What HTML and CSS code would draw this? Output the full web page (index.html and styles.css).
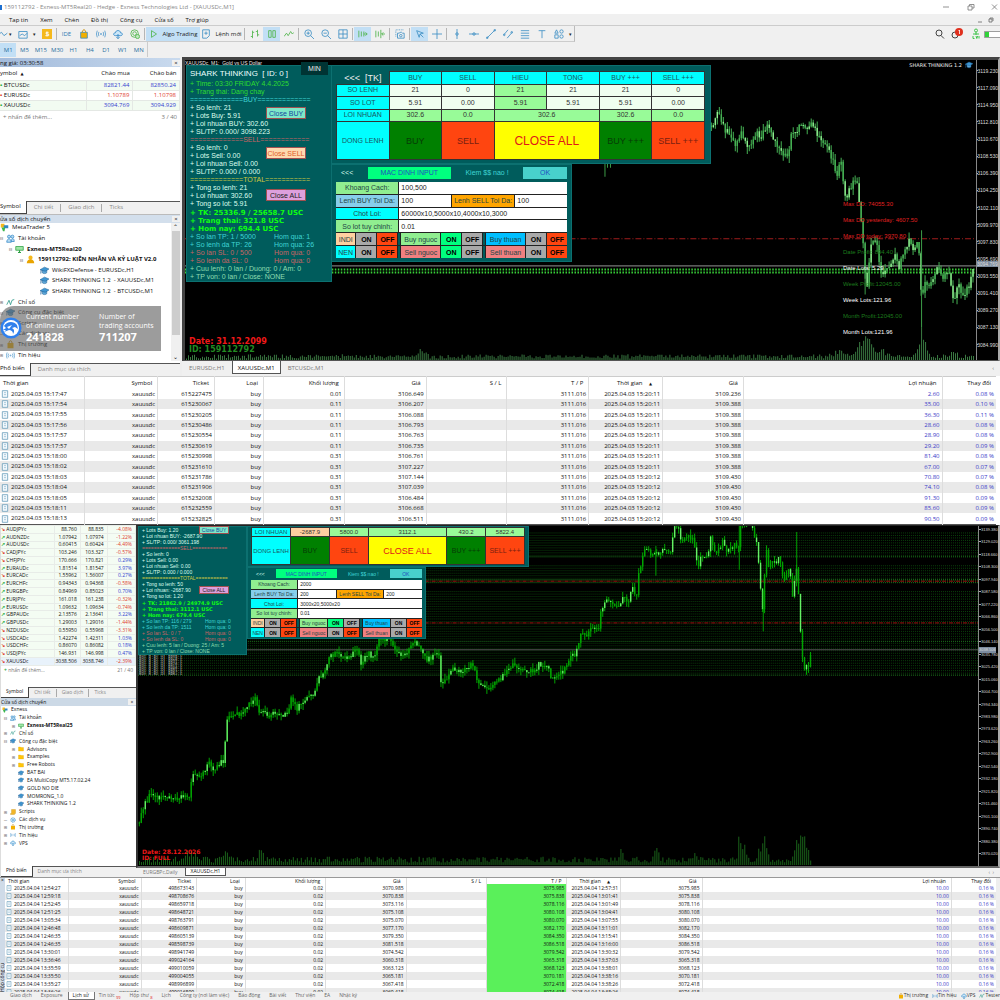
FILE: index.html
```html
<!DOCTYPE html>
<html lang="vi">
<head>
<meta charset="utf-8">
<meta name="viewport" content="width=device-width, initial-scale=1">
<title>Exness - MetaTrader 5</title>
<link rel="stylesheet" href="styles.css">
</head>
<body>
<svg width="0" height="0" class="defs" aria-hidden="true">
  <symbol id="i-cap" viewBox="0 0 12 12"><path d="M3 5v4c2 1.500 4 1.500 6 0V5z" fill="#5fa8d8" stroke="#1d5f96" stroke-width=".7"/><path d="M0 5l6-3.500L12 4 7 7z" fill="#3f97d3" stroke="#1d5f96" stroke-width=".7"/><path d="M1.500 5.500L1 10" stroke="#1d5f96"/></symbol>
  <symbol id="i-users" viewBox="0 0 12 12"><g fill="#b9dcf3" stroke="#2f86c5"><circle cx="4" cy="3.500" r="2"/><circle cx="8.500" cy="3.500" r="2"/><path d="M1 11c0-6 6-6 6 0zM7 10c0-5 4-5 4 0z"/></g></symbol>
  <symbol id="i-server" viewBox="0 0 12 12"><path d="M1 2h10v5H1z" fill="#9fe6a6" stroke="#2ca043"/><path d="M4 10h4M6 7v3" stroke="#2ca043" stroke-width="1.500"/></symbol>
  <symbol id="i-user" viewBox="0 0 12 12"><circle cx="6" cy="3.500" r="2.800" fill="#f5b81c"/><path d="M1 11c0-7 10-7 10 0z" fill="#e9a400"/></symbol>
  <symbol id="i-ind" viewBox="0 0 12 12"><path d="M1 9l3-6 2 6 2-6 3-1" fill="none" stroke="#2f9a8a" stroke-width="1.100"/></symbol>
  <symbol id="i-folder" viewBox="0 0 12 12"><path d="M1 2h4l1 1h5v7H1z" fill="#ffc50a" stroke="#dea200" stroke-width=".6"/></symbol>
  <symbol id="i-script" viewBox="0 0 12 12"><path d="M3 1h8v8H9v2H1V9h2z" fill="#f2b526" stroke="#b88100" stroke-width=".6"/></symbol>
  <symbol id="i-gear" viewBox="0 0 12 12"><circle cx="6" cy="6" r="4.500" fill="#cbe6f8" stroke="#2f86c5" stroke-dasharray="2 1" stroke-width="1.500"/><circle cx="6" cy="6" r="1.500" fill="#2f86c5"/></symbol>
  <symbol id="i-bag" viewBox="0 0 12 12"><path d="M2 4h8v7H2z" fill="#f2b000"/><path d="M4 4c0-4 4-4 4 0" fill="none" stroke="#c98c00" stroke-width="1.200"/></symbol>
  <symbol id="i-sig" viewBox="0 0 12 12"><g fill="none" stroke="#2f86c5" stroke-width=".8"><circle cx="6" cy="6" r=".7"/><path d="M3.500 3.500q-1.500 2.500 0 5M8.500 3.500q1.500 2.500 0 5M1.500 2q-2 4 0 8M10.500 2q2 4 0 8"/></g></symbol>
  <symbol id="i-cloud" viewBox="0 0 12 12"><path d="M3 8C0 8 0 4.500 3 4.500 3 1 9 1 9 4.500c3 0 3 3.500 0 3.500z" fill="#cbe6f8" stroke="#2f86c5"/><path d="M6 6v5M4 10l2 1.500L8 10" fill="none" stroke="#2f86c5"/></symbol>
  <symbol id="i-mt" viewBox="0 0 12 12"><path d="M1 1h5v5H1z" fill="#f5b81c"/><path d="M5 3h6v4H5z" fill="#2f86c5"/><path d="M2 6h5l-1 5H4z" fill="#3cb54a"/></symbol>
  <symbol id="i-doc" viewBox="0 0 12 12"><path d="M2 1h8v10H2z" fill="#f3f9fd" stroke="#4f8cad"/><path d="M5 4h2M5 7h2" stroke="#4f8cad"/></symbol>
</svg>

<section class="app app-a">
  <header class="titlebar">
    <span class="app-mark"></span>
    <span>159112792 - Exness-MT5Real20 - Hedge - Exness Technologies Ltd - [XAUUSDc,M1]</span>
    <span class="win-ctl">
      <svg viewBox="0 0 60 8"><path d="M3 4h6M28 3h4v4h-4zM29.500 3V1.500H34V5h-2M52 1.500l5 5M57 1.500l-5 5" fill="none" stroke="#777" stroke-width=".8"/></svg>
    </span>
  </header>
  <nav class="menubar">
    <a href="#">Tap tin</a><a href="#">Xem</a><a href="#">Chèn</a><a href="#">Đồ thị</a><a href="#">Công cụ</a><a href="#">Cửa sổ</a><a href="#">Trợ giúp</a>
    <svg class="mdi" viewBox="0 0 24 8"><path d="M2 6h4M13 3h3v3h-3zM14 3V2h3v3" fill="none" stroke="#666" stroke-width=".8"/></svg>
  </nav>
  <div class="toolbar">
    <div class="tools" id="tools"></div>
    <svg class="status" viewBox="0 0 66 14"><g fill="none" stroke="#444"><circle cx="5" cy="6" r="3"/><path d="M7 8.500l3 3"/><circle cx="21" cy="8" r="3"/></g><circle cx="25" cy="5" r="4" fill="#e0301e"/><path d="M24.500 4l1-1v4" fill="none" stroke="#fff" stroke-width=".8"/><g fill="none" stroke="#3fc44a"><circle cx="42" cy="3.500" r="1.500"/><path d="M39 7h6M42 5v3M39 9v2.500h1.500M42 9l.8 2.500.8-2.500M45 9v2.500"/></g><path d="M50.500 4.500h17v6h-17z" fill="#fff" stroke="#777" stroke-width=".7"/><path d="M51 5h4v5h-4z" fill="#31d23a"/></svg>
  </div>
  <div class="frames">
    <button class="on">M1</button><button>M5</button><button>M15</button><button>M30</button><button>H1</button><button>H4</button><button>D1</button><button>W1</button><button>MN</button>
  </div>

  <div class="work">
    <aside class="side">
      <h2 class="dock">ng giá: 03:30:58<button aria-label="Đóng">×</button></h2>
      <table class="watch">
        <thead><tr><th>ymbol &nbsp;<i>▲</i></th><th>Chào mua</th><th>Chào bán</th></tr></thead>
        <tbody>
          <tr><td><b class="up">•</b> BTCUSDc</td><td class="blue">82821.44</td><td class="blue">82850.24</td></tr>
          <tr><td><b class="down">•</b> EURUSDc</td><td class="red">1.10789</td><td class="red">1.10798</td></tr>
          <tr><td><b class="up">•</b> XAUUSDc</td><td class="blue">3094.769</td><td class="blue">3094.929</td></tr>
        </tbody>
      </table>
      <p class="add"><span>+ nhấn để thêm...</span><span>3 / 40</span></p>
      <nav class="tabs"><a href="#" class="on">Symbol</a><a href="#">Chi tiết</a><a href="#">Giao dịch</a><a href="#">Ticks</a></nav>
      <h2 class="dock dock-nav">ửa sổ dịch chuyển<button aria-label="Đóng">×</button></h2>
      <div class="nav-box">
        <ul class="tree" id="tree-a"></ul>
        <div class="scroll"><span>⌃</span><i></i><span>⌄</span></div>
        <div class="stats">
          <svg class="eagle" viewBox="0 0 22 22"><circle cx="11" cy="11" r="10.500" fill="#2f80ed"/><circle cx="11" cy="11" r="8" fill="#fff"/><path d="M4 9c3-5 10-5 13-1l1 4-3-2-3 1c2 1 3 3 1 6 0-3-2-4-4-4l-5 2 2-2-3 0 3-2z" fill="#2f80ed"/><path d="M7 10l5-2-3 4z" fill="#fff"/></svg>
          <dl><dt>Current number<br>of online users</dt><dd>241828</dd></dl>
          <dl><dt>Number of<br>trading accounts</dt><dd>711207</dd></dl>
        </div>
      </div>
      <nav class="tabs tabs-foot"><a href="#" class="on">Phổ biến</a><a href="#">Danh mục ưa thích</a></nav>
    </aside>

    <div class="main">
      <div class="chart">
        <div class="plot">
          <svg id="plot-a" viewBox="185 61 792 298" preserveAspectRatio="none"></svg>
          <p class="caption">XAUUSDc, M1: &nbsp;Gold vs US Dollar</p>
          <p class="expert">SHARK THINKING 1.2 <svg viewBox="0 0 12 12"><use href="#i-cap"/></svg></p>
          <div class="info">
            <button class="min">MIN</button>
            <h3>SHARK THINKING &nbsp;[ ID: 0 ]</h3>
            <ul class="lines head"><li class="lime">+ Time: 03:30 FRIDAY 4.4.2025</li><li class="lime">+ Trang thai: Dang chay</li></ul>
            <ul class="lines">
              <li class="aqua">=============BUY=============</li>
              <li>+ So lenh: 21</li><li>+ Lots Buy: 5.91</li><li>+ Loi nhuan BUY: 302.60</li><li>+ SL/TP: 0.000/ 3098.223</li>
              <li class="rose">=============SELL============</li>
              <li>+ So lenh: 0</li><li>+ Lots Sell: 0.00</li><li>+ Loi nhuan Sell: 0.00</li><li>+ SL/TP: 0.000 / 0.000</li>
              <li class="gold">=============TOTAL===========</li>
              <li>+ Tong so lenh: 21</li><li>+ Loi nhuan: 302.60</li><li>+ Tong so lot: 5.91</li>
            </ul>
            <ul class="lines big"><li>+ TK: 25336.9 / 25658.7 USC</li><li>+ Trang thai: 321.8 USC</li><li>+ Hom nay: 694.4 USC</li></ul>
            <ul class="lines">
              <li class="aqua">+ So lan TP: 1 / 5000<span>Hom qua: 1</span></li><li class="aqua">+ So lenh da TP: 26<span>Hom qua: 26</span></li>
              <li class="rose">+ So lan SL: 0 / 500<span>Hom qua: 0</span></li><li class="rose">+ So lenh da SL: 0<span>Hom qua: 0</span></li>
              <li class="mint">+ Cuu lenh: 0 lan / Duong: 0 / Am: 0</li><li class="mint">+ TP von: 0 lan / Close: NONE</li>
            </ul>
            <button class="close c-buy">Close BUY</button><button class="close c-sell">Close SELL</button><button class="close c-all">Close ALL</button>
          </div>
          <div class="dash">
            <table>
              <tr><td class="none">&lt;&lt;&lt; &nbsp;[TK]</td><th>BUY</th><th>SELL</th><th>HIEU</th><th>TONG</th><th>BUY +++</th><th>SELL +++</th></tr>
              <tr><th>SO LENH</th><td>21</td><td>0</td><td class="g">21</td><td>21</td><td>21</td><td>0</td></tr>
              <tr><th>SO LOT</th><td>5.91</td><td>0.00</td><td class="g">5.91</td><td>5.91</td><td>5.91</td><td>0.00</td></tr>
              <tr><th>LOI NHUAN</th><td class="g">302.6</td><td class="g">0.0</td><td class="g" colspan="2">302.6</td><td class="g">302.6</td><td class="g">0.0</td></tr>
              <tr class="act"><th>DONG LENH</th><td><button class="b-buy">BUY</button></td><td><button class="b-sell">SELL</button></td><td colspan="2"><button class="b-all">CLOSE ALL</button></td><td><button class="b-buy">BUY +++</button></td><td><button class="b-sell">SELL +++</button></td></tr>
            </table>
          </div>
          <form class="inputs" data-values="100,500|100|100|60000x10,5000x10,4000x10,3000|0.01" data-sell="ON"></form>
          <ul class="dd">
            <li class="r">Max DD: 74055.30</li><li class="r">Max DD yesterday: 4607.50</li><li class="r">Max DD today: 3970.80</li><li class="n">Date Profit: 894.40</li><li>Date Lots: 5.29</li><li class="n">Week Profit:12045.00</li><li>Week Lots:121.96</li><li class="n">Month Profit:12045.00</li><li>Month Lots:121.96</li>
          </ul>
          <p class="stamp"><b>Date: 31.12.2099</b><b class="id">ID: 159112792</b></p>
        </div>
        <ol class="axis" id="axis-a"></ol>
      </div>
      <nav class="chart-tabs"><a href="#">EURUSDc,H1</a><a href="#" class="on">XAUUSDc,M1</a><a href="#">BTCUSDc,M1</a><span>‹</span></nav>
    </div>
  </div>
  <table class="deals" id="deals-a"></table>
</section>

<section class="app app-b">
  <div class="work">
    <aside class="side">
      <table class="watch" id="watch-b"></table>
      <p class="add"><span><b class="up">+</b> nhấn để thêm...</span><span>21 / 40</span></p>
      <nav class="tabs"><a href="#" class="on">Symbol</a><a href="#">Chi tiết</a><a href="#">Giao dịch</a><a href="#">Ticks</a></nav>
      <h2 class="dock dock-nav">Cửa sổ dịch chuyển<button aria-label="Đóng">×</button></h2>
      <ul class="tree" id="tree-b"></ul>
      <nav class="tabs tabs-foot"><a href="#" class="on">Phổ biến</a><a href="#">Danh mục ưa thích</a></nav>
    </aside>
    <div class="main">
      <div class="chart">
        <div class="plot">
          <svg id="plot-b" viewBox="138 525 841 342" preserveAspectRatio="none"></svg>
          <div class="info">
            <ul class="lines">
              <li>+ Lots Buy: 1.20</li><li>+ Loi nhuan BUY: -2687.90</li><li>+ SL/TP: 0.000/ 3061.198</li>
              <li class="rose">=============SELL============</li>
              <li>+ So lenh: 0</li><li>+ Lots Sell: 0.00</li><li>+ Loi nhuan Sell: 0.00</li><li>+ SL/TP: 0.000 / 0.000</li>
              <li class="gold">=============TOTAL===========</li>
              <li>+ Tong so lenh: 50</li><li>+ Loi nhuan: -2687.90</li><li>+ Tong so lot: 1.20</li>
            </ul>
            <ul class="lines big"><li>+ TK: 21862.9 / 24974.9 USC</li><li>+ Trang thai: 3112.1 USC</li><li>+ Hom nay: 679.4 USC</li></ul>
            <ul class="lines">
              <li class="aqua">+ So lan TP: 116 / 279<span>Hom qua: 0</span></li><li class="aqua">+ So lenh da TP: 1511<span>Hom qua: 0</span></li>
              <li class="rose">+ So lan SL: 0 / 7<span>Hom qua: 0</span></li><li class="rose">+ So lenh da SL: 0<span>Hom qua: 0</span></li>
              <li class="mint">+ Cuu lenh: 5 lan / Duong: 25 / Am: 5</li><li class="mint">+ TP von: 0 lan / Close: NONE</li>
            </ul>
            <button class="close c-buy">Close BUY</button><button class="close c-all">Close ALL</button>
          </div>
          <div class="dash">
            <table>
              <tr><th>LOI NHUAN</th><td class="p">-2687.9</td><td class="g">5800.0</td><td class="g" colspan="2">3112.1</td><td class="g">430.2</td><td class="g">5822.4</td></tr>
              <tr class="act"><th>DONG LENH</th><td><button class="b-buy">BUY</button></td><td><button class="b-sell">SELL</button></td><td colspan="2"><button class="b-all">CLOSE ALL</button></td><td><button class="b-buy">BUY +++</button></td><td><button class="b-sell">SELL +++</button></td></tr>
            </table>
          </div>
          <form class="inputs" data-values="2000|200|200|3000x20,5000x20|0.01" data-sell="OFF"></form>
          <ul class="orders" id="orders"></ul>
          <p class="stamp"><b>Date: 28.12.2026</b><b>ID: FULL</b></p>
        </div>
        <ol class="axis" id="axis-b"></ol>
      </div>
      <nav class="chart-tabs"><a href="#">EURGBPc,Daily</a><a href="#" class="on">XAUUSDc,H1</a><span>‹ &nbsp;›</span></nav>
    </div>
  </div>
  <div class="toolbox">
    <div class="grip"><button aria-label="Đóng">×</button><span>Hộp công cụ</span></div>
    <table class="deals" id="deals-b"></table>
  </div>
  <footer class="foot">
    <a href="#">Giao dịch</a><a href="#">Exposure</a><a href="#" class="on">Lịch sử</a><a href="#">Tin tức <sub>99</sub></a><a href="#">Hộp thư <sub>8</sub></a><a href="#">Lịch</a><a href="#">Công ty (nơi làm việc)</a><a href="#">Báo động</a><a href="#">Bài viết</a><a href="#">Thư viện</a><a href="#">EA</a><a href="#">Nhật ký</a>
    <span class="foot-right"><span><svg viewBox="0 0 12 12"><use href="#i-bag"/></svg>Thị trường</span><span><svg viewBox="0 0 12 12"><use href="#i-sig"/></svg>Tín hiệu</span><span><svg viewBox="0 0 12 12"><use href="#i-cloud"/></svg>VPS</span><span><svg viewBox="0 0 12 12"><use href="#i-ind"/></svg>Tester</span></span>
  </footer>
</section>
<script src="app.js"></script>
</body>
</html>
```

FILE: styles.css
```css
* { box-sizing: border-box; }
:root {
  --ui: "Open Sans", "Noto Sans", sans-serif;
  --teal: #005c5c;
}
body { margin: 0; background: #f0f0f0; font-family: var(--ui); color: #111; }
ul, ol, p, h2, h3, dl, dd { margin: 0; padding: 0; list-style: none; font-weight: normal; }
button, input { font: inherit; color: inherit; border: 0; padding: 0; margin: 0; background: none; border-radius: 0; min-width: 0; white-space: nowrap; }
a { color: inherit; text-decoration: none; }
table { border-collapse: collapse; width: 100%; table-layout: fixed; }
td, th { padding: 0; font-weight: normal; white-space: nowrap; overflow: hidden; }
.defs { position: absolute; }
.app { overflow: hidden; }
.app-a { font-size: 6px; }
.app-b { font-size: 5px; }

/* Title, menu and tool bars */
.titlebar { display: flex; align-items: center; height: 14px; background: #fff; color: #888; gap: 2px; }
.app-mark { width: 2px; height: 5px; background: #1d6fd0; }
.win-ctl { margin-left: auto; width: 60px; }
.win-ctl svg, .mdi { display: block; height: 8px; }
.menubar { display: flex; align-items: center; height: 12px; padding-left: 9px; gap: 12px; border-bottom: 1px solid #ccc; color: #111; }
.menubar .mdi { margin-left: auto; width: 24px; }
.toolbar { display: flex; align-items: center; justify-content: space-between; height: 16px; }
.tools { display: flex; align-items: center; height: 16px; border-right: 1px solid #bbb; border-bottom: 1px solid #ccc; }
.tools button { display: flex; align-items: center; justify-content: center; gap: 4px; width: 17px; height: 14px; color: #2878b0; }
.tools button.wide { width: 54px; color: #222; }
.tools button.mid { width: 43px; color: #222; }
.tools button.tiny { width: 7px; color: #222; font-size: 5px; }
.tools svg { width: 10px; height: 10px; flex: none; fill: none; stroke: #3d8fc4; }
.tools .on, .frames .on { background: #c2dff5; }
.tools hr { width: 1px; height: 12px; margin: 0 1px; border: 0; background: #b5b5b5; }
.status { width: 66px; height: 14px; }
.frames { display: flex; align-items: center; width: 148px; height: 15px; border-right: 1px solid #ccc; color: #2a6f9e; }
.frames button { flex: 1; height: 14px; }

/* Side docks */
.work { display: flex; }
.side { flex: none; background: #fff; display: flex; flex-direction: column; }
.app-a .side { width: 182px; border-right: 2px solid #eee; margin-top: 1px; }
.app-b .side { width: 136px; border-left: 1px solid #ddd; }
.dock { display: flex; justify-content: space-between; align-items: center; background: linear-gradient(90deg, #a3bbdb, #c9daee); font-size: inherit; }
.app-a .dock { height: 9px; }
.app-a .dock-nav { background: #d3dfec; border-top: 1px solid #bbb; }
.app-b .dock { height: 8px; background: #ccd9e6; }
.dock button { width: 8px; background: #f0f0f0; line-height: 6px; }
.watch td + td, .watch th + th { text-align: right; padding-right: 3px; }
.watch th { text-align: left; }
.watch i { font: 4px "DejaVu Sans", sans-serif; vertical-align: middle; }
.app-a .watch th { height: 13px; }
.app-a .watch th:first-child { width: 48%; }
.app-a .watch td { height: 10px; border: 1px solid #e4e8e4; border-left: 0; background: #f2fbf1; }
.app-a .watch tr:nth-child(2) td { background: #fff; }
.app-b .watch { height: 141px; line-height: 5px; }
.app-b .watch td { border: 1px solid #e8ece8; border-left: 0; background: #f4fcf3; }
.app-b .watch tr:last-child td { background: #e8f2fb; }
.up { color: #2eab3c; }
.down, .red { color: #e0402e; }
.blue { color: #3340d0; }
.add { display: flex; justify-content: space-between; color: #777; padding: 0 3px; }
.app-a .add { height: 12px; align-items: center; margin-bottom: 78px; }
.app-b .add { height: 8px; align-items: center; margin-bottom: 13px; }
.tabs { display: flex; color: #888; border-top: 1px solid #555; background: #f0f0f0; }
.tabs a { padding: 0 7px; border-right: 1px solid #aaa; margin: 2px 0; line-height: 7px; }
.tabs a:last-child { border: 0; }
.tabs .on { background: #fff; color: #111; border-right: 1px solid #444; border-bottom: 1px solid #444; margin: -1px 0 0; line-height: 10px; padding: 0 5px 0 0; }
.app-a .tabs { height: 13px; }
.app-b .tabs { height: 11px; }
.app-b .tabs a { margin: 1px 0; padding: 0 5px; line-height: 6px; }
.app-b .tabs .on { line-height: 8px; margin: -1px 0 0; }
.nav-box { position: relative; display: flex; }
.nav-box .tree { flex: 1; }
.tree { display: grid; grid-auto-rows: 1fr; }
.app-a .tree { height: 138px; }
.app-b .tree { height: 141px; }
.tabs-foot { margin-top: auto; }
.tree li { display: flex; align-items: center; gap: 3px; min-height: 0; line-height: 7px; white-space: nowrap; }
.tree svg { width: 9px; height: 9px; flex: none; }
.app-b .tree svg { width: 6px; height: 6px; }
.tree .box { font: 5px "DejaVu Sans Mono", monospace; color: #555; }
.tree .l2 { padding-left: 9px; }
.tree .l3 { padding-left: 20px; }
.tree .l4 { padding-left: 40px; }
.app-b .tree .l0 { padding-left: 1px; }
.app-b .tree .l1 { padding-left: 3px; }
.app-b .tree .l2 { padding-left: 11px; }
.app-b .tree .l3 { padding-left: 17px; }
.scroll { display: flex; flex-direction: column; justify-content: space-between; align-items: center; width: 9px; background: #f0f0f0; }
.scroll i { flex: 1; width: 8px; margin-bottom: 18px; background: #cdcdcd; }
.stats { position: absolute; left: 0; top: 83px; width: 161px; height: 45px; display: flex; gap: 20px; align-items: center; background: rgba(95, 95, 95, .62); color: #fff; border-top-left-radius: 14px; font: 7px/9px "Open Sans", sans-serif; }
.stats .eagle { width: 22px; height: 22px; margin-right: -16px; flex: none; }
.stats dl { flex: none; }
.stats dt { white-space: nowrap; }
.stats dd { font: bold 11px/14px "Open Sans", sans-serif; }

/* Chart windows */
.main { flex: 1; min-width: 0; }
.chart { display: flex; background: #000; border: 3px solid #444; border-right: 2px solid #aaa; border-bottom: 1px solid #555; }
.app-a .chart { height: 304px; }
.app-b .chart { height: 343px; border-top: 1px solid #222; border-left: 2px solid #333; border-bottom: 2px solid #666; }
.plot { position: relative; flex: 1; min-width: 0; border-right: 1px solid #888; overflow: hidden; }
.plot > svg { position: absolute; width: 100%; height: 100%; }
.axis { display: flex; flex-direction: column; width: 21px; color: #ddd; font-family: "Liberation Sans", sans-serif; }
.axis li { flex: 1; display: flex; align-items: center; white-space: nowrap; }
.axis li::before { content: ""; width: 2px; height: 1px; background: #aaa; }
.app-a .axis { font-size: 5px; padding: 2px 0 7px; position: relative; }
.app-b .axis { width: 19px; font-size: 4px; padding-bottom: 6px; margin-top: -3px; position: relative; }
.axis .now { position: absolute; left: 0; background: #7d8da0; height: 6px; line-height: 6px; }
.axis .now::before { display: none; }
.app-a .axis .now { top: 201px; }
.app-b .axis .now { top: 124px; }
.caption, .expert { position: absolute; top: 0; color: #eee; font: 5px/7px "Liberation Sans", sans-serif; }
.expert { right: 3px; top: 1px; display: flex; align-items: center; gap: 3px; font-family: "DejaVu Sans", sans-serif; }
.expert svg { width: 8px; height: 8px; }
.chart-tabs { display: flex; color: #777; background: #f0f0f0; }
.chart-tabs a { padding: 0 7px; }
.chart-tabs .on { background: #fff; color: #111; border: 1px solid #555; border-top: 0; padding: 0 5px; }
.chart-tabs span { margin-left: auto; padding-right: 6px; }
.app-a .chart-tabs { height: 15px; line-height: 14px; }
.app-a .chart-tabs .on { height: 13px; }
.app-b .chart-tabs { height: 9px; line-height: 8px; }
.app-b .chart-tabs .on { height: 8px; line-height: 7px; }

/* Trading panels drawn over the chart */
.info, .dash, .inputs { position: absolute; background: var(--teal); font-family: "Liberation Sans", sans-serif; color: #dfe; border: 1px solid #0c7070; }
.app-a .info { left: 1px; top: 5px; width: 146px; height: 217px; padding: 1px 3px; }
.app-b .info { left: 0; top: 0; width: 109px; height: 129px; padding: 0 3px; }
.info h3 { font-size: 8px; line-height: 13px; color: #eff; }
.lines { line-height: 8px; font-size: 7px; white-space: nowrap; }
.lines li { position: relative; }
.lines span { position: absolute; left: 84px; }
.lines.big { font: bold 7px/8px "DejaVu Sans", sans-serif; color: #1f1; padding-top: 1px; }
.app-b .lines { font-size: 5px; line-height: 6px; }
.app-b .lines.big { font-size: 5px; }
.app-b .lines span { left: 63px; }
.lime { color: #2fdc2f; }
.aqua { color: #3fd4d4; }
.rose { color: #c86464; }
.gold { color: #d0c840; }
.mint { color: #8fdcb0; }
.min { position: absolute; right: 3px; top: -4px; width: 27px; height: 13px; background: #003434; color: #eee; font-size: 7px; }
.close { position: absolute; left: 79px; width: 40px; height: 12px; border: 1px solid #a05050; font-size: 7px; line-height: 9px; }
.c-buy { top: 41px; background: #7fe8c8; color: #1548a0; }
.c-sell { top: 81px; background: #ffdab0; color: #e05a28; }
.c-all { top: 123px; background: #dda0dd; color: #222; }
.app-b .close { left: 60px; width: 30px; height: 8px; font-size: 5px; line-height: 6px; }
.app-b .c-buy { top: -1px; }
.app-b .c-all { top: 59px; }
.app-a .dash { left: 146px; top: 5px; width: 380px; height: 99px; padding: 5px 5px 4px 4px; font-size: 7px; }
.app-b .dash { left: 109px; top: 0; width: 282px; height: 41px; padding: 0 3px; font-size: 6px; }
.dash table { border-collapse: separate; border-spacing: 1px; height: 89px; line-height: 8px; }
.app-b .dash table { height: 37px; }
.dash td, .dash th { text-align: center; background: #f0fff0; color: #333; outline: 1px solid #333; }
.dash th { background: #0ff; color: #1a5560; }
.dash .g { background: #98fb98; }
.dash .p { background: #ffcfa0; }
.dash .none { background: none; outline: 0; color: #eee; font-size: 9px; }
.dash .act { height: 37px; }
.app-b .dash .act { height: 27px; }
.dash .act button { display: block; width: 100%; height: 37px; font-size: 9px; }
.app-b .dash .act button { height: 27px; font-size: 7px; }
.b-buy { background: #008000; color: #063c06; }
.b-sell { background: #ff4510; color: #7a1f10; }
.dash .act .b-all { background: #ff0; color: #e01818; font-size: 12px; }
.app-b .dash .act .b-all { font-size: 9px; }
.inputs { font-size: 7px; }
.app-a .inputs { left: 146px; top: 104px; width: 241px; height: 98px; padding: 0 4px; }
.app-b .inputs { left: 109px; top: 41px; width: 179px; height: 72px; padding: 0 3px; font-size: 5px; }
.inputs .top { display: flex; align-items: center; justify-content: space-between; height: 17px; padding: 1px 0 3px; }
.app-b .inputs .top { height: 12px; padding: 1px 0 2px; }
.inputs .top button { height: 12px; color: #2050c0; }
.app-b .inputs .top button { height: 9px; }
.inputs .top span:first-child { padding-left: 5px; }
.inputs .top .def { width: 36%; background: #00ff7f; }
.inputs .top .ok { width: 19%; background: #48d1cc; }
.inputs .top em { font-style: normal; color: #3fd4d4; }
.inputs .rows { display: grid; grid-auto-rows: 1fr; gap: 1px; height: 76px; background: #222; }
.app-b .inputs .rows { height: 57px; }
.inputs .rows > div { display: flex; gap: 1px; min-height: 0; }
.inputs label, .inputs .sw > * { display: flex; align-items: center; justify-content: center; color: #244; white-space: nowrap; overflow: hidden; }
.inputs label { width: 27%; background: #90ee90; flex: none; }
.inputs input { flex: 1; width: 10px; background: #fff; color: #222; padding-left: 2px; }
.inputs .sky { background: #87ceeb; }
.inputs .cy { background: #0ff; }
.inputs .or { background: #ffa500; }
.inputs .sw button { width: 20px; background: #a9a9a9; color: #000; font-weight: bold; }
.app-b .inputs .sw button { width: 15px; }
.inputs .sw button.off { background: #ff4510; }
.inputs .sw button.act { background: #00ff7f; }
.inputs .sw b { flex: 2; font-weight: normal; }
.inputs .sw b.s { flex: 1; }
.inputs .sw i { width: 2px; background: var(--teal); }
.pe { background: #ffd0a0; } .lg { background: #90ee90; } .db { background: #00bfff; } .sa { background: #f08080; }
.dd { position: absolute; right: 60px; top: 136px; width: 73px; color: #fff; font: 6px/16px "Liberation Sans", sans-serif; white-space: nowrap; }
.dd .r { color: #e02020; }
.dd .n { color: #1c7a1c; }
.stamp { position: absolute; left: 4px; bottom: 6px; color: #f01818; font: bold 8px/8px "DejaVu Sans", sans-serif; }
.stamp b { display: block; }
.stamp .id { color: #228b22; }
.app-b .stamp { font-size: 6px; line-height: 6px; bottom: 5px; }
.orders { position: absolute; left: 1px; top: 129px; color: #bbb; font: 4px/2px "Liberation Mono", monospace; }

/* Deal history */
.deals { background: #fff; text-align: right; border-top: 1px solid #ccc; }
.deals td, .deals th { padding-right: 2px; border-right: 1px solid #ddd; }
.deals td:first-child, .deals th:first-child { text-align: left; }
.deals th { padding: 0 5px 0 3px; }
.deals tbody tr:nth-child(even) td { background: #e9e9e9; }
.deals td:nth-child(n+11) { color: #3838c8; }
.deals svg { width: 8px; height: 8px; vertical-align: middle; margin: 0 2px 0 1px; }
.deals i { font: 4px "DejaVu Sans", sans-serif; padding: 0 5px; vertical-align: middle; }
.app-a .deals { height: 149px; border-bottom: 1px solid #555; border-right: 4px solid #fff; }
.app-a .deals thead { height: 12px; }
.toolbox { display: flex; background: #fff; overflow: hidden; border-top: 1px solid #999; height: 115px; }
.grip { width: 5px; background: #cfdbe8; display: flex; flex-direction: column; justify-content: space-between; flex: none; }
.grip button { width: 5px; line-height: 5px; }
.grip span { writing-mode: vertical-rl; transform: rotate(180deg); white-space: nowrap; line-height: 5px; }
.app-b .deals { height: 118px; border-top: 0; border-right: 4px solid #eee; }
.app-b .deals svg { width: 6px; height: 6px; }
.app-b .deals td:nth-child(8) { background: #5af05a; }
.foot { display: flex; height: 8px; line-height: 7px; color: #666; background: #f0f0f0; padding-left: 6px; white-space: nowrap; overflow: hidden; }
.foot a { padding: 0 5px 0 4px; }
.foot .on { background: #fff; color: #111; border: 1px solid #777; border-top: 0; }
.foot sub { color: #e02020; font-size: 4px; line-height: 4px; }
.foot-right { margin-left: auto; display: flex; gap: 4px; color: #333; }
.foot-right svg { width: 6px; height: 6px; vertical-align: middle; }
```

FILE: app.js
```js
const $ = (id) => document.getElementById(id);
const icon = (name) => `<svg viewBox="0 0 12 12"><use href="#i-${name}"/></svg>`;

// Tool bar
const draw = (d, extra = '') => `<svg viewBox="0 0 12 12">${extra}<path d="${d}"/></svg>`;
const caret = '<button class="tiny">▾</button>';
const green = (d) => `<svg viewBox="0 0 12 12"><path style="stroke:#4fb54a" d="${d}"/></svg>`;
$('tools').innerHTML = [
  `<button class="tiny">${draw('M0 6l3-2 3 4 4-3')}</button>`, caret,
  `<button>${draw('M1 3h10v8H1zM2 8l3-2 3 2 3-3')}</button>`, caret,
  `<button>${draw('M8 4H5v2h3v2H4M6 3v6', '<rect width="12" height="12" fill="#f5b81c" stroke="none"/>').replace('<path', '<path style="stroke:#fff"')}</button><hr>`,
  '<button>IDE</button>', `<button>${icon('bag')}</button>`, `<button>${icon('sig')}</button>`, `<button>${icon('cloud')}</button>`,
  `<button><svg viewBox="0 0 12 12"><g style="stroke:#4fb54a"><circle cx="5.500" cy="5.500" r="4.500"/><circle cx="5.500" cy="5.500" r="2.200"/><circle cx="9" cy="9" r="2.500" fill="#bfe8bf"/></g></svg></button><hr>`,
  `<button class="wide on">${green('M3 2l6 4-6 4z')}Algo Trading</button>`,
  `<button class="mid">${draw('M2 1h8v7l-3 3H2zM4 5h4M6 3v4')}Lệnh mới</button><hr>`,
  `<button>${green('M3 2v9M3 9H1M3 4h2M9 1v8M9 3H7M9 7h2')}</button>`,
  `<button class="on">${green('M2 2h3v8H2zM7 2h3v8H7z')}</button>`,
  `<button>${green('M0 9l3-4 2 3 3-5 2 3 2-2')}</button><hr>`,
  `<button>${draw('M8 8l4 4M3 5h4M5 3v4', '<circle cx="5" cy="5" r="4"/>')}</button>`,
  `<button>${draw('M8 8l4 4M3 5h4', '<circle cx="5" cy="5" r="4"/>')}</button>`,
  `<button>${draw('M1 1h10v10H1zM6 1v10M1 6h10')}</button><hr>`,
  `<button class="on">${green('M1 2v8M4 3v6M7 3v6M7 6h4M9 4l2 2-2 2')}</button>`,
  `<button>${green('M1 2v8M4 3v6M7 1v10M12 6H8M10 4L8 6l2 2')}</button><hr>`,
  `<button>${draw('M3 5h2l1-1h2l1 1h2v6H3z', '<circle cx="7" cy="8" r="1.5"/><path d="M1 9V1h9" stroke-dasharray="1 1"/>')}</button><hr>`,
  `<button class="on">${draw('M2 2l8 3-4 1-1 4zM6 6l4 4')}</button>`,
  `<button>${draw('M6 0v12M0 6h12')}</button><hr>`,
  `<button>${draw('M6 0v12', '<circle cx="6" cy="6" r="1.5"/>')}</button>`,
  `<button>${draw('M0 6h12', '<circle cx="6" cy="6" r="1.5"/>')}</button>`,
  `<button>${draw('M1 11L11 1', '<circle cx="1.5" cy="10.5" r="1"/><circle cx="10.500" cy="1.500" r="1"/>')}</button>`,
  `<button>${draw('M1 7l5-6M5 11l6-7', '<circle cx="1.5" cy="7" r="1"/><circle cx="10.500" cy="4" r="1"/>')}</button>`,
  `<button>${draw('M1 2h10M1 5h10M1 8h10M1 11h10')}</button>`,
  `<button>${draw('M2 2h8M6 2v9')}</button>`,
  `<button>${draw('M1 5l2-4 2 4zM1 7h4v4H1z', '<circle cx="9" cy="3" r="2"/><circle cx="9" cy="9" r="2"/>')}</button>`, caret
].join('');

// Navigator trees: level, icon, label, expander, bold
const tree = (id, rows) => {
  $(id).innerHTML = rows.map(([lvl, ic, text, box, bold]) =>
    `<li class="l${lvl}">${box ? `<span class="box">${box}</span>` : ''}${icon(ic)}${bold ? `<b>${text}</b>` : text}</li>`).join('');
};
tree('tree-a', [
  [0, 'mt', 'MetaTrader 5'], [1, 'users', 'Tài khoản', '⊟'], [2, 'server', 'Exness-MT5Real20', '⊟', 1],
  [3, 'user', '159112792: KIÊN NHẪN VÀ KỶ LUẬT V2.0', '⊟', 1], [4, 'cap', 'WikiFXDefense - EURUSDc,H1'],
  [4, 'cap', 'SHARK THINKING 1.2 &nbsp;- XAUUSDc,M1'], [4, 'cap', 'SHARK THINKING 1.2 &nbsp;- BTCUSDc,M1'],
  [1, 'ind', 'Chỉ số', '⊞'], [1, 'cap', 'Công cụ đặc biệt', '⊟'], [1, 'script', 'Scripts', '⊞'],
  [1, 'gear', 'Các dịch vụ', '–'], [1, 'bag', 'Thị trường', '⊞'], [1, 'sig', 'Tín hiệu', '⊞']]);
tree('tree-b', [
  [0, 'mt', 'Exness'], [1, 'users', 'Tài khoản', '⊟'], [2, 'server', 'Exness-MT5Real25', '⊞', 1], [1, 'ind', 'Chỉ số', '⊞'],
  [1, 'cap', 'Công cụ đặc biệt', '⊟'], [2, 'folder', 'Advisors', '⊞'], [2, 'folder', 'Examples', '⊞'], [2, 'folder', 'Free Robots', '⊞'],
  [3, 'cap', 'BAT BAI'], [3, 'cap', 'EA MultiCopy MT5.17.02.24'], [3, 'cap', 'GOLD NO DIE'], [3, 'cap', 'MOMRONG_1.0'], [3, 'cap', 'SHARK THINKING 1.2'],
  [1, 'script', 'Scripts', '⊞'], [1, 'gear', 'Các dịch vụ', '–'], [1, 'bag', 'Thị trường', '⊞'], [1, 'sig', 'Tín hiệu', '⊞'], [1, 'cloud', 'VPS', '⊞']]);

// Market watch of the second terminal
const quotes = `AUDJPYc 88.760 88.835 -4.08 d
AUDNZDc 1.07942 1.07974 -1.22 u
AUDUSDc 0.60415 0.60424 -4.49 u
CADJPYc 103.246 103.327 -0.57 d
CHFJPYc 170.666 170.821 0.29 d
EURAUDc 1.81514 1.81547 3.97 u
EURCADc 1.55962 1.56007 0.27 d
EURCHFc 0.94343 0.94368 -0.58 u
EURGBPc 0.84969 0.85023 0.70 u
EURJPYc 161.018 161.238 -0.32 u
EURUSDc 1.09632 1.09634 -0.74 u
GBPAUDc 2.13576 2.13641 3.22 u
GBPUSDc 1.29003 1.29016 -1.44 u
NZDUSDc 0.55950 0.55968 -3.31 d
USDCADc 1.42274 1.42311 1.03 d
USDCHFc 0.86070 0.86082 0.18 d
USDJPYc 146.931 146.998 0.47 d
XAUUSDc 3038.506 3038.746 -2.39 d`.split('\n').map((r) => r.split(' '));
$('watch-b').innerHTML = '<colgroup><col style="width:40%"><col style="width:19%"><col style="width:20%"><col style="width:21%"></colgroup>' +
  quotes.map(([s, b, a, c, d]) => `<tr><td><b class="${d === 'u' ? 'up' : 'down'}">${d === 'u' ? '↗' : '↘'}</b> ${s}</td><td>${b}</td><td>${a}</td><td class="${c < 0 ? 'red' : 'blue'}">${c}%</td></tr>`).join('');

// Deal history tables
const heads = ['Thời gian', 'Symbol', 'Ticket', 'Loại', 'Khối lượng', 'Giá', 'S / L', 'T / P', 'Thời gian <i>▲</i>', 'Giá', 'Lợi nhuận', 'Thay đổi'];
const deals = (id, widths, rows) => {
  $(id).innerHTML = `<colgroup>${widths.map((w) => `<col style="width:${w}%">`).join('')}</colgroup>` +
    `<thead><tr>${heads.map((h) => `<th>${h}</th>`).join('')}</tr></thead><tbody>` +
    rows.map((r) => `<tr>${r.map((c, i) => `<td>${i ? '' : icon('doc')}${c}</td>`).join('')}</tr>`).join('') + '</tbody>';
};
deals('deals-a', [8.5, 7.3, 5.7, 4.9, 8.1, 8.2, 8.1, 8.2, 7.4, 8.1, 19.9, 5.6], `47 615227475 0.01 3106.649 11 3109.236 2.60 0.08
54 615230067 0.11 3106.207 11 3109.388 35.00 0.10
55 615230205 0.11 3106.088 11 3109.388 36.30 0.11
56 615230486 0.11 3106.793 11 3109.388 28.60 0.08
57 615230554 0.11 3106.763 11 3109.388 28.90 0.08
57 615230619 0.11 3106.735 11 3109.388 29.20 0.09
00 615230998 0.31 3106.761 11 3109.388 81.40 0.08
02 615231610 0.31 3107.227 11 3109.388 67.00 0.07
03 615231786 0.31 3107.144 12 3109.430 70.80 0.07
04 615231906 0.31 3107.039 12 3109.430 74.10 0.08
05 615232008 0.31 3106.484 12 3109.430 91.30 0.09
11 615232559 0.31 3106.668 12 3109.430 85.60 0.09
13 615232825 0.31 3106.511 12 3109.430 90.50 0.09`.split('\n').map((l, i) => {
  const [s, t, v, p, e, q, g, c] = l.split(' ');
  return [`2025.04.03 15:${i < 6 ? 17 : 18}:${s}`, 'xauusdc', t, 'buy', v, p, '', '3111.016', `2025.04.03 15:20:${e}`, q, g, `${c} %`];
}));
deals('deals-b', [6.4, 7.3, 5.6, 4.9, 8.1, 8.1, 8.1, 8.1, 5.4, 8.2, 25.1, 4.7], `12:54:27 498673143 3070.985 3075.985 12:57:31
12:59:18 498708676 3070.838 3075.838 13:01:41
12:52:45 498659718 3073.116 3078.116 13:01:49
12:51:25 498648721 3075.108 3080.108 13:04:41
13:05:34 498763791 3075.070 3080.070 13:07:55
12:46:48 498609871 3077.170 3082.170 13:11:01
12:46:35 498605139 3079.350 3084.350 13:15:41
12:46:35 498598739 3081.518 3086.518 13:16:00
13:30:01 498941749 3074.542 3079.542 13:30:32
13:36:46 499024164 3060.318 3065.318 13:37:03
13:35:59 499010059 3063.123 3068.123 13:38:01
13:35:50 499004055 3065.181 3070.181 13:38:16
13:35:27 498996899 3067.418 3072.418 13:38:26
13:36:26 499016899 3069.418 3074.418 13:38:26`.split('\n').map((l) => {
  const [a, t, p, q, b] = l.split(' ');
  return [`2025.04.04 ${a}`, 'xauusdc', t, 'buy', '0.02', p, '', q, `2025.04.04 ${b}`, q, '10.00', '0.16 %'];
}));

// Input forms over the charts
document.querySelectorAll('.inputs').forEach((form, n) => {
  const v = form.dataset.values.split('|');
  const field = (i, text, cls = '') => `<label class="${cls}" for="f${n}${i}">${text}</label><input id="f${n}${i}" value="${v[i]}">`;
  const sellOn = form.dataset.sell === 'ON';
  const pair = (on, off) => `<button type="button" class="${on}">ON</button><button type="button" class="${off}">OFF</button>`;
  form.innerHTML = `<div class="top"><span>&lt;&lt;&lt;</span><button type="button" class="def">MAC DINH INPUT</button><em>Kiem $$ nao !</em><button type="button" class="ok">OK</button></div>
  <div class="rows"><div>${field(0, 'Khoang Cach:')}</div>
  <div>${field(1, 'Lenh BUY Toi Da:', 'sky')}${field(2, 'Lenh SELL Toi Da:', 'or')}</div>
  <div>${field(3, 'Chot Loi:', 'cy')}</div><div>${field(4, 'So lot tuy chinh:')}</div>
  <div class="sw"><b class="s pe">INDI</b>${pair('', 'off')}<i></i><b class="lg">Buy nguoc</b>${pair('act', '')}<i></i><b class="db">Buy thuan</b>${pair('', 'off')}</div>
  <div class="sw"><b class="s cy">NEN</b>${pair('', 'off')}<i></i><b class="sa">Sell nguoc</b>${sellOn ? pair('act', '') : pair('', 'off')}<i></i><b class="sa">Sell thuan</b>${pair('', 'off')}</div></div>`;
});
$('orders').innerHTML = ['085', '070', '055', '041', '026', '011', '996', '981', '967', '952'].map((s) => `<li>BUY 0.02 at 3${s}.1</li>`).join('');

// Price scales
const axis = (id, start, step, count, now) => {
  let out = '';
  for (let i = 0; i < count; i++) out += `<li>${(start - step * i).toFixed(3)}</li>`;
  $(id).innerHTML = out + `<li class="now">${now}</li>`;
};
axis('axis-a', 3119.23, 2.14, 17, '3094.769');
axis('axis-b', 3139.38, 10.36, 27, '3038.506');

// Candles follow the price path; the seed keeps the shape stable between loads
let seed = 7;
const rnd = () => (seed = (seed * 16807) % 2147483647) / 2147483647;
const candles = (path, dx, amp, wick, body) => {
  let out = '', k = 0, prev = path[0][1];
  for (let x = path[0][0]; x <= path[path.length - 1][0]; x += dx) {
    while (k < path.length - 2 && path[k + 1][0] < x) k++;
    const [x0, y0] = path[k], [x1, y1] = path[k + 1];
    const y = y0 + (y1 - y0) * (x - x0) / (x1 - x0) + (rnd() - .5) * amp;
    const hi = Math.min(prev, y) - rnd() * amp, lo = Math.max(prev, y) + rnd() * amp;
    out += `<path d="M${x.toFixed(1)} ${hi.toFixed(1)}V${lo.toFixed(1)}" stroke="${wick}"/><rect x="${(x - .7).toFixed(1)}" y="${Math.min(prev, y).toFixed(1)}" width="1.4" height="${Math.max(1, Math.abs(y - prev)).toFixed(1)}" fill="${rnd() > .65 ? body : wick}"/>`;
    prev = y;
  }
  return out;
};
const volume = (x0, x1, dx, base, low, peaks, color) => {
  let d = '';
  for (let x = x0; x < x1; x += dx) {
    let h = low * (.4 + rnd());
    peaks.forEach(([px, ph, w]) => { h += Math.max(0, 1 - Math.abs(x - px) / w) * ph * (.5 + rnd() * .5); });
    d += `M${x} ${base}v${-h.toFixed(1)}`;
  }
  return `<path d="${d}" stroke="${color}"/>`;
};
const from = (ox, oy, pts) => pts.map(([x, y]) => [ox + x / 3, oy + y / 3]);

const pathA = from(700, 58, [[36, 205], [55, 170], [75, 210], [105, 260], [125, 225], [148, 270], [170, 230], [185, 235], [203, 205], [225, 255], [245, 268], [262, 308], [275, 240], [300, 205], [320, 215], [342, 200], [360, 240], [380, 270], [405, 310], [410, 370], [425, 310], [440, 420], [462, 375], [475, 385], [490, 540], [503, 695], [515, 570], [530, 540], [548, 650], [570, 620], [585, 590], [600, 630], [615, 580], [632, 535], [640, 575], [658, 548], [668, 725], [680, 655], [690, 690], [710, 632], [730, 655], [750, 655], [765, 725], [778, 680], [795, 710], [810, 680], [822, 635]]);
$('plot-a').innerHTML =
  '<path d="M185 238.500H977" stroke="#a01c1c" stroke-dasharray="6 2 1 2"/>' +
  '<path d="M185 265.500H977" stroke="#777"/>' +
  '<path d="M185 269H977M185 272H977" stroke="#38d038" stroke-width="2" stroke-dasharray="1.500 1.500"/>' +
  volume(186.5, 976, 2, 359, 4, [[866, 24, 14], [923, 30, 8], [884, 8, 8], [840, 6, 12], [955, 7, 6], [420, 8, 10]], '#3a7a42') +
  candles(pathA, 2, 7, '#46b254', '#90f090') +
  '<path d="M605.500 164v13M608 164v4M611 164v4M922.500 230v97M866 260v34" stroke="#3c9c48"/>';

const pathB = from(0, 695, [[418, 385], [430, 340], [450, 300], [470, 310], [500, 305], [530, 320], [545, 300], [565, 320], [580, 235], [600, 250], [625, 205], [645, 235], [660, 200], [670, 210], [680, 80], [705, 50]])
  .concat(from(240, 520, [[0, 580], [20, 565], [45, 535], [60, 575], [90, 590], [110, 575], [145, 590], [155, 530], [170, 570], [200, 530], [220, 530], [235, 480], [255, 450], [275, 400], [305, 405], [335, 415], [350, 380], [365, 435], [385, 400], [405, 410], [415, 360], [450, 350], [475, 400], [500, 395], [530, 365], [545, 380], [560, 420], [600, 400], [605, 505], [640, 440], [665, 465], [695, 430], [720, 490], [735, 505], [770, 490], [790, 465], [820, 430], [845, 455], [880, 455], [900, 430], [920, 435], [935, 470], [970, 455], [990, 410], [1010, 400], [1025, 340], [1040, 350], [1050, 325], [1078, 325]]))
  .concat(from(600, 520, [[0, 325], [5, 260], [30, 230], [45, 260], [65, 245], [75, 230], [90, 240], [98, 190], [110, 240], [120, 145], [140, 80], [155, 105], [175, 100], [195, 80], [215, 90], [225, 20], [235, 10], [245, 60], [270, 50], [283, 55], [295, 140], [310, 100], [325, 105], [335, 45], [350, 110], [370, 60], [385, 90], [405, 70], [420, 85], [425, 5], [455, 10], [475, 80], [482, 190], [492, 280], [500, 60], [507, 130], [525, 125], [540, 115], [555, 180], [570, 140], [580, 220], [595, 130], [600, 270], [608, 390], [615, 450], [630, 430], [635, 390]]));
let rows = '', strong = '';
[[532, 556], [565, 582], [591, 641], [643, 675]].forEach(([a, b]) => {
  for (let y = a; y < b; y += 2.5) rows += `M138 ${y}H979`;
  strong += `M138 ${b}H979`;
});
$('plot-b').innerHTML =
  `<path d="${rows}" stroke="#0b420b" stroke-dasharray="1 1"/><path d="${strong}M138 579H979" stroke="#1d7a1d" stroke-dasharray="1 1"/>` +
  '<path d="M138 580.500H979M138 622.500H979" stroke="#a01010" stroke-dasharray="4 1 1 1"/>' +
  '<path d="M138 649.500H979" stroke="#555"/>' +
  volume(139.5, 812, 2, 866, 6, [[190, 10, 10], [227, 13, 6], [261, 14, 5], [622, 14, 4], [657, 15, 5], [696, 10, 6], [740, 30, 3], [745, 18, 6], [764, 30, 7], [802, 36, 10]], '#1a621a') +
  candles(pathB, 2, 6, '#00a400', '#66f066') +
  '<path d="M797.500 531v50M764 590v41M740 525v44M656.500 545v30" stroke="#00a000"/>';
```
